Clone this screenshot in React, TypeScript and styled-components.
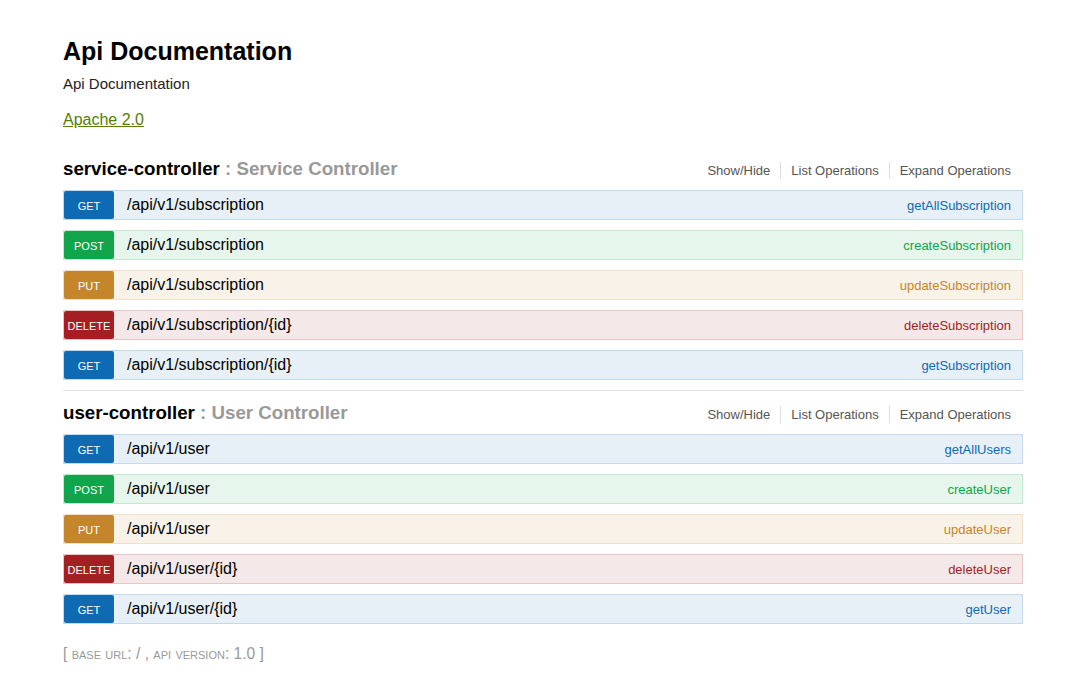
import React from 'react'
import styled, { createGlobalStyle } from 'styled-components'

type Method = 'get' | 'post' | 'put' | 'delete'

const palette: Record<Method, { bg: string; border: string; main: string }> = {
  get: { bg: '#e7f0f7', border: '#c3d9ec', main: '#0f6ab4' },
  post: { bg: '#e7f6ec', border: '#c3e8d1', main: '#10a54a' },
  put: { bg: '#f9f2e9', border: '#f0e0ca', main: '#c5862b' },
  delete: { bg: '#f5e8e8', border: '#e8c6c7', main: '#a41e22' },
}

const GlobalStyle = createGlobalStyle`
  html, body {
    margin: 0;
    padding: 0;
    background: #ffffff;
  }
  body {
    font-family: 'Liberation Sans', Arial, sans-serif;
    color: #000;
  }
`

const Wrap = styled.div`
  width: 960px;
  margin-left: 63px;
  padding-top: 36px;
`

const Title = styled.h1`
  margin: 0;
  font-size: 25px;
  line-height: 30px;
  font-weight: 700;
  color: #000;
`

const Description = styled.div`
  margin-top: 8px;
  font-size: 15px;
  line-height: 20px;
  color: #222;
`

const License = styled.a`
  display: inline-block;
  margin-top: 16px;
  font-size: 16px;
  line-height: 20px;
  color: #547f00;
  text-decoration: underline;
`

const Resources = styled.ul`
  list-style: none;
  margin: 17px 0 0;
  padding: 0;
`

const Resource = styled.li`
  padding-top: 10px;
  border-bottom: 1px solid #ddd;

  &:last-child {
    border-bottom: none;
  }
`

const Heading = styled.div`
  display: flex;
  align-items: baseline;
  justify-content: space-between;
  margin-bottom: 9px;
`

const ResourceName = styled.h2`
  margin: 0;
  font-size: 18.7px;
  line-height: 24px;
  font-weight: 700;
  color: #999;

  span {
    color: #000;
  }
`

const Options = styled.ul`
  display: flex;
  list-style: none;
  margin: 0;
  padding: 0 2px 0 0;
`

const Option = styled.li`
  padding: 0 10px;
  font-size: 13px;
  line-height: 17px;
  color: #555;
  border-right: 1px solid #ddd;

  &:last-child {
    border-right: none;
  }
`

const Operation = styled.div<{ $method: Method }>`
  display: flex;
  align-items: stretch;
  height: 30px;
  box-sizing: border-box;
  margin-bottom: 10px;
  background: ${p => palette[p.$method].bg};
  border: 1px solid ${p => palette[p.$method].border};
`

const Badge = styled.span<{ $method: Method }>`
  display: flex;
  align-items: center;
  justify-content: center;
  width: 50px;
  padding-top: 2px;
  box-sizing: border-box;
  border-radius: 2px;
  background: ${p => palette[p.$method].main};
  color: #fff;
  font-size: 11px;
  font-weight: 400;
  text-transform: uppercase;
`

const Path = styled.span`
  flex: 1;
  display: flex;
  align-items: center;
  padding-left: 13px;
  font-size: 16px;
  color: #000;
`

const OpName = styled.span<{ $method: Method }>`
  display: flex;
  align-items: center;
  padding-right: 11px;
  font-size: 13px;
  color: ${p => palette[p.$method].main};
`

const Footer = styled.div`
  margin-top: 20px;
  font-size: 15.6px;
  line-height: 20px;
  color: #999;
  font-variant: small-caps;
`

type Op = { method: Method; path: string; name: string }

const sections: { id: string; label: string; ops: Op[] }[] = [
  {
    id: 'service-controller',
    label: 'Service Controller',
    ops: [
      { method: 'get', path: '/api/v1/subscription', name: 'getAllSubscription' },
      { method: 'post', path: '/api/v1/subscription', name: 'createSubscription' },
      { method: 'put', path: '/api/v1/subscription', name: 'updateSubscription' },
      { method: 'delete', path: '/api/v1/subscription/{id}', name: 'deleteSubscription' },
      { method: 'get', path: '/api/v1/subscription/{id}', name: 'getSubscription' },
    ],
  },
  {
    id: 'user-controller',
    label: 'User Controller',
    ops: [
      { method: 'get', path: '/api/v1/user', name: 'getAllUsers' },
      { method: 'post', path: '/api/v1/user', name: 'createUser' },
      { method: 'put', path: '/api/v1/user', name: 'updateUser' },
      { method: 'delete', path: '/api/v1/user/{id}', name: 'deleteUser' },
      { method: 'get', path: '/api/v1/user/{id}', name: 'getUser' },
    ],
  },
]

const App = () => {
  return (
    <>
      <GlobalStyle />
      <Wrap>
        <Title>Api Documentation</Title>
        <Description>Api Documentation</Description>
        <License href="#">Apache 2.0</License>

        <Resources>
          {sections.map(s => (
            <Resource key={s.id}>
              <Heading>
                <ResourceName>
                  <span>{s.id}</span> : {s.label}
                </ResourceName>
                <Options>
                  <Option>Show/Hide</Option>
                  <Option>List Operations</Option>
                  <Option>Expand Operations</Option>
                </Options>
              </Heading>
              {s.ops.map((op, i) => (
                <Operation key={i} $method={op.method}>
                  <Badge $method={op.method}>{op.method}</Badge>
                  <Path>{op.path}</Path>
                  <OpName $method={op.method}>{op.name}</OpName>
                </Operation>
              ))}
            </Resource>
          ))}
        </Resources>

        <Footer>[ base url: / , api version: 1.0 ]</Footer>
      </Wrap>
    </>
  )
}

export default App
